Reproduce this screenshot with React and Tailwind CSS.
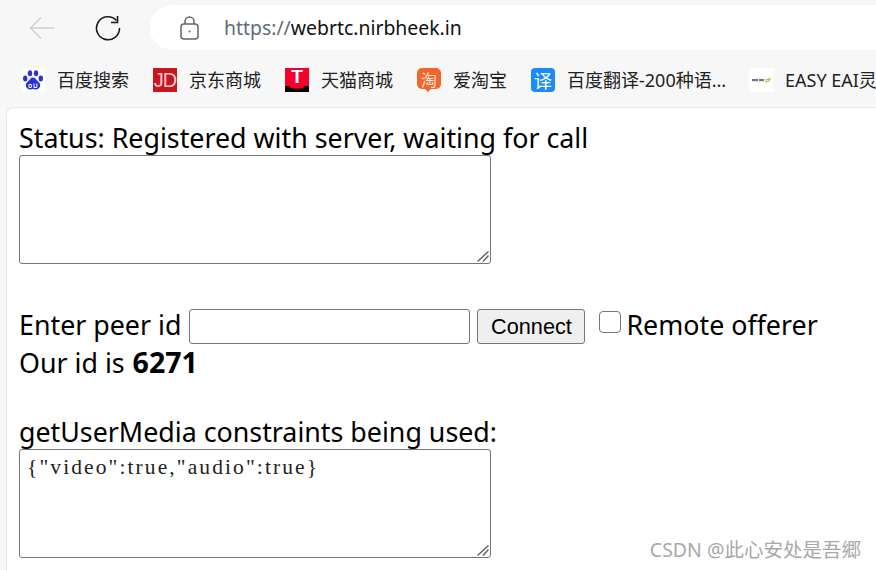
import React from "react";

const cjk = "font-['Noto_Sans','Noto_Sans_CJK_SC',sans-serif]";

function Paw() {
  return (
    <div className="w-6 h-6 bg-white rounded-[3px] flex items-center justify-center shrink-0">
      <svg width="22" height="22" viewBox="0 0 22 22" fill="#2932e1">
        <ellipse cx="3.2" cy="9.5" rx="2.2" ry="2.9" />
        <ellipse cx="8" cy="4.2" rx="2.2" ry="3" />
        <ellipse cx="14" cy="4.2" rx="2.2" ry="3" />
        <ellipse cx="18.8" cy="9.5" rx="2.2" ry="2.9" />
        <path d="M11 8.5c2.4 0 3.2 2.2 4.6 3.5 1.5 1.3 2.6 2.4 2.6 4.3 0 2.6-2 4.2-4.4 4.2-1.2 0-1.9-.5-2.8-.5s-1.6.5-2.8.5c-2.4 0-4.4-1.6-4.4-4.2 0-1.9 1.1-3 2.6-4.3C7.8 10.700 8.600 8.500 11 8.500z" />
        <path d="M7 15.500h2.300v3H7zM12 14.500v4h2.800v-4" fill="none" stroke="#fff" strokeWidth="1" />
      </svg>
    </div>
  );
}

function Jd() {
  return (
    <div className="w-6 h-6 bg-[#c9151e] flex items-center justify-center shrink-0 text-[#f3c9cb] text-[20px] leading-none font-['Liberation_Sans',sans-serif] tracking-[-1px]">
      JD
    </div>
  );
}

function Tmall() {
  return (
    <div className="w-6 h-6 bg-[#f5002a] shrink-0 flex flex-col items-center relative">
      <span className="text-white font-bold text-[19px] leading-[18px] font-['Liberation_Sans',sans-serif]">T</span>
      <svg className="absolute bottom-0 left-0" width="24" height="7" viewBox="0 0 24 7">
        <path d="M0 7V1h4c1 0 1.500 2.500 4 2.500h8c2.500 0 3-2.500 4-2.500h4v6z" fill="#000" />
      </svg>
    </div>
  );
}

function Taobao() {
  return (
    <div className="w-6 h-6 shrink-0 relative">
      <div className="w-6 h-[21px] bg-[#f4652b] rounded-[5px] flex items-center justify-center text-[#fde3d6] text-[16px] leading-none font-['Noto_Sans_CJK_SC',sans-serif]">
        淘
      </div>
      <div className="absolute left-[7px] bottom-0 w-0 h-0 border-l-[4px] border-r-[4px] border-t-[4px] border-l-transparent border-r-transparent border-t-[#f4652b]" />
    </div>
  );
}

function Translate() {
  return (
    <div className="w-6 h-6 bg-[#1a8cfa] rounded-[4px] shrink-0 flex items-center justify-center text-white text-[18px] leading-none font-['Noto_Sans_CJK_SC',sans-serif]">
      译
    </div>
  );
}

function EasyLogo() {
  return (
    <div className="w-6 h-6 bg-white shrink-0 flex items-center justify-center">
      <svg width="20" height="8" viewBox="0 0 20 8">
        <rect x="1" y="3" width="6" height="2.200" fill="#777" />
        <rect x="8" y="3" width="5" height="2.200" fill="#777" />
        <path d="M14 6c3 0 5-1.500 5-3.500-1.500 1-3 1.500-5 1.500" fill="none" stroke="#a5c63b" strokeWidth="1.200" />
      </svg>
    </div>
  );
}

function Grip() {
  return (
    <svg className="absolute right-[2px] bottom-[2px] pointer-events-none" width="12" height="11" viewBox="0 0 12 11" fill="none" stroke="#5f5f5f" strokeWidth="1.400">
      <path d="M0.500 10.500 11.500 0.500M6 10.500 11.500 4.500" />
    </svg>
  );
}

const bookmarks = [
  { icon: <Paw />, label: "百度搜索", w: "w-[132px]" },
  { icon: <Jd />, label: "京东商城", w: "w-[132px]" },
  { icon: <Tmall />, label: "天猫商城", w: "w-[132px]" },
  { icon: <Taobao />, label: "爱淘宝", w: "w-[114px]" },
  { icon: <Translate />, label: "百度翻译-200种语...", w: "w-[218px]" },
  { icon: <EasyLogo />, label: "EASY EAI灵眸科技", w: "w-[180px]" },
];

export default function App() {
  return (
    <div className={`w-[876px] h-[570px] overflow-hidden bg-[#f7f7f7] flex flex-col ${cjk} relative`}>
      <div className="h-[56px] flex items-start shrink-0 pt-[5px]">
        <div className="w-[150px] h-[45px] flex items-center shrink-0 pl-[29px] gap-[41px]">
          <svg width="26" height="26" viewBox="0 0 26 26" fill="none" stroke="#d0d0d0" strokeWidth="1.500" className="shrink-0">
            <path d="M25 13H2M12 2.500 1.500 13 12 23.500" />
          </svg>
          <svg width="26" height="26" viewBox="0 0 26 26" fill="none" stroke="#1a1a1a" strokeWidth="1.600" className="shrink-0 -ml-[1px]">
            <path d="M21.500 5.500A11.500 11.500 0 1 0 24.500 13" />
            <path d="M22.500 1v6.500H16" />
          </svg>
        </div>
        <div className="flex-1 h-[45px] bg-white rounded-l-[23px] flex items-center pl-[30px] min-w-0">
          <svg width="20" height="24" viewBox="0 0 20 24" fill="none" stroke="#666" strokeWidth="1.500" className="shrink-0">
            <rect x="1" y="8" width="17" height="15" rx="3" />
            <path d="M5 8V5.500a4.500 4.500 0 0 1 9 0V8" />
            <circle cx="9.500" cy="15.500" r="1" fill="#666" stroke="none" />
          </svg>
          <div className="ml-[24px] text-[19.400px] leading-none whitespace-nowrap text-[#111]">
            <span className="text-[#5f6b76]">https://</span>webrtc.nirbheek.in
          </div>
        </div>
      </div>

      <div className="h-[51px] flex items-center shrink-0 pl-[21px] pb-[3px] overflow-hidden">
        {bookmarks.map((b) => (
          <div key={b.label} className={`flex items-center gap-[12px] shrink-0 ${b.w}`}>
            {b.icon}
            <span className="text-[18px] leading-none text-[#222] whitespace-nowrap">{b.label}</span>
          </div>
        ))}
      </div>

      <div className="ml-[6px] flex-1 bg-white rounded-tl-[8px] border-t border-l border-[#e9e9e9] pl-[12px] text-[26.800px] leading-[36px] text-black min-h-0 flex flex-col items-start">
        <div className="h-[47px] pt-[12px] whitespace-nowrap leading-[36px]">Status: Registered with server, waiting for call</div>
        <div className="relative w-[472px] h-[109px] shrink-0">
          <textarea readOnly className="block w-full h-full border border-[#767676] rounded-[3px] bg-white resize-none" />
          <Grip />
        </div>
        <div className="h-[45px] shrink-0" />
        <div className="flex items-center h-[35px] whitespace-nowrap">
          <span className="-mt-[4px]">Enter peer id</span>
          <input readOnly className="ml-[8px] w-[281px] h-[35px] border border-[#767676] rounded-[3px] bg-white" />
          <button className="ml-[7px] w-[108px] h-[35px] border border-[#767676] rounded-[3px] bg-[#efefef] text-[21.700px] leading-none font-['Liberation_Sans',sans-serif] text-black">
            Connect
          </button>
          <input type="checkbox" readOnly className="ml-[14px] w-[22px] h-[22px] appearance-none border border-[#767676] rounded-[4px] bg-white -mt-[9px]" />
          <span className="ml-[5px] -mt-[4px]">Remote offerer</span>
        </div>
        <div className="h-[36px] whitespace-nowrap">
          Our id is <b className="ml-[1px] font-bold text-[28.500px]">6271</b>
        </div>
        <div className="h-[34px] shrink-0" />
        <div className="h-[35px] whitespace-nowrap">getUserMedia constraints being used:</div>
        <div className="relative w-[472px] h-[109px] shrink-0">
          <textarea
            readOnly
            value={'{"video":true,"audio":true}'}
            className="block w-full h-full border border-[#767676] rounded-[3px] bg-white resize-none px-[7px] pt-[4px] text-[21.500px] leading-[27px] tracking-[2.100px] text-[#222] font-['Liberation_Serif',serif]"
          />
          <Grip />
        </div>
      </div>

      <div className="absolute right-[15px] bottom-[11px] text-[19.500px] leading-none text-[#a8a8a8] whitespace-nowrap">
        CSDN @此心安处是吾郷
      </div>
    </div>
  );
}
